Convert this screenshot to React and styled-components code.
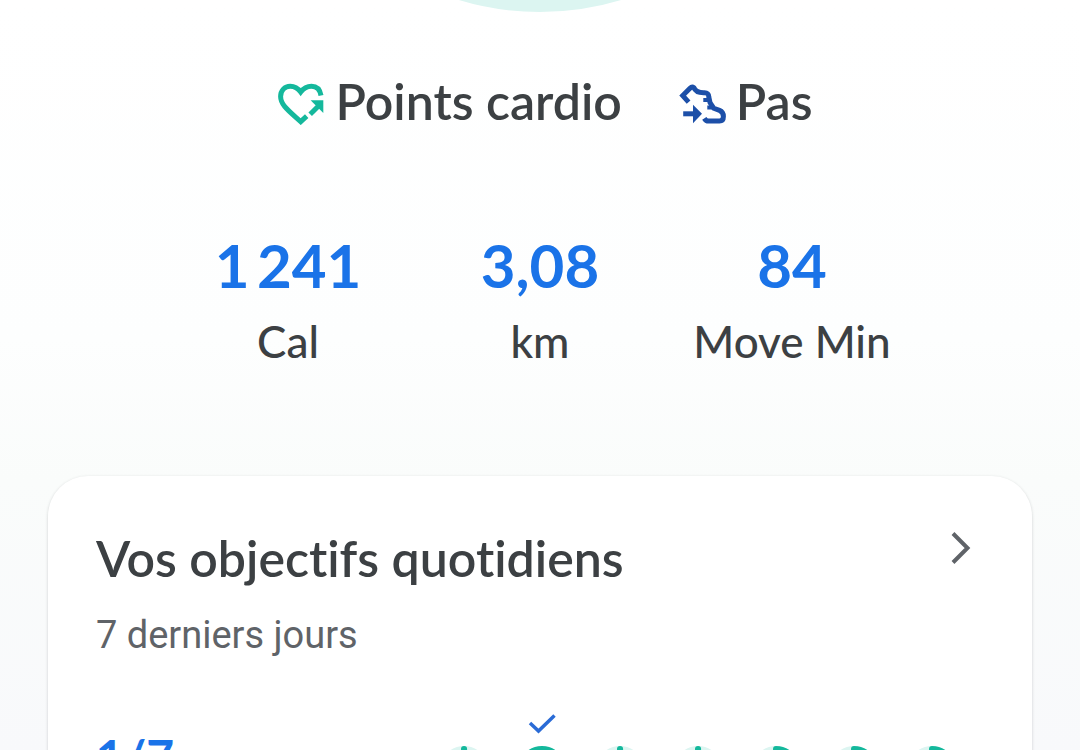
import React from "react";
import styled, { createGlobalStyle } from "styled-components";

const GlobalStyle = createGlobalStyle`
  * {
    box-sizing: border-box;
  }

  body {
    margin: 0;
    background: #ffffff;
    color: #3c4043;
    font-family: Lato, "Open Sans", sans-serif;
    font-weight: 500;
    font-variant-ligatures: none;
  }

  h2, p, dl, dt, dd, ul {
    margin: 0;
    padding: 0;
  }
`;

const Page = styled.main`
  height: 100vh;
  overflow: hidden;
  background: linear-gradient(#ffffff 0%, #fdfefe 45%, #fafcfb 64%, #f8f9fb 100%);
`;

const RingArea = styled.div`
  display: flex;
  flex-direction: column;
  justify-content: flex-end;
  align-items: center;
  height: 12px;
`;

const Ring = styled.div`
  flex: none;
  width: 560px;
  height: 560px;
  border: 32px solid #dcf5f1;
  border-radius: 50%;
`;

const Legend = styled.ul`
  display: flex;
  justify-content: center;
  gap: 56px;
  margin-top: 57px;
  padding-left: 10px;
  list-style: none;
`;

const LegendItem = styled.li`
  display: flex;
  align-items: center;
  gap: 10px;
  font-size: 50px;
  font-weight: 600;
  line-height: 64px;
`;

const LegendIcon = styled.svg`
  width: 48px;
  height: 48px;
  fill: none;
  stroke: ${props => props.$color};
  stroke-width: 5;
`;

const Stats = styled.dl`
  display: grid;
  grid-template-columns: repeat(3, 1fr);
  width: 70%;
  margin: 96px auto 0;
  text-align: center;
`;

const Stat = styled.div`
  display: flex;
  flex-direction: column-reverse;
  gap: 12px;
`;

const StatValue = styled.dd`
  color: #1a73e8;
  font-size: 60px;
  font-weight: 700;
  line-height: 72px;
`;

const StatLabel = styled.dt`
  font-size: 44px;
  line-height: 56px;
`;

const Card = styled.section`
  margin: 107px 48px 0;
  padding: 50px 48px;
  background: #ffffff;
  border-radius: 40px;
  box-shadow: 0 1px 3px rgba(60, 64, 67, 0.25);
`;

const CardHeader = styled.header`
  display: flex;
  justify-content: space-between;
  align-items: flex-start;
`;

const CardTitle = styled.h2`
  font-size: 50px;
  font-weight: 600;
  line-height: 64px;
`;

const CardSubtitle = styled.p`
  margin-top: 21px;
  color: #5f6368;
  font-family: Roboto, sans-serif;
  font-size: 38px;
  font-weight: 400;
  line-height: 48px;
`;

const OpenButton = styled.button`
  display: flex;
  padding: 0 4px 0 0;
  border: none;
  background: none;
  cursor: pointer;
`;

const Goals = styled.div`
  display: flex;
  justify-content: space-between;
  margin-top: 54px;
`;

const GoalCount = styled.p`
  margin-top: 12px;
  color: #1a73e8;
  font-size: 48px;
  font-weight: 700;
  line-height: 64px;
`;

const Days = styled.ul`
  display: flex;
  gap: 30px;
  padding-right: 28px;
  list-style: none;
`;

const Day = styled.li`
  display: flex;
  flex-direction: column;
  align-items: center;
  gap: 12px;
`;

const CheckSlot = styled.span`
  display: block;
  width: 28px;
  height: 21px;
`;

const days = [
  { id: 1, progress: 0.1 },
  { id: 2, progress: 100, done: true },
  { id: 3, progress: 0.1 },
  { id: 4, progress: 0.1 },
  { id: 5, progress: 20 },
  { id: 6, progress: 20 },
  { id: 7, progress: 20 }
];

const HeartIcon = () => (
  <LegendIcon viewBox="0 -3 48 48" $color="#14b89c" aria-hidden="true">
    <path d="M44 15.5C43 9.5 39.5 6.2 34.5 6.2c-4.300 0-8 2-10.800 5.800C21 8.200 17.300 6.200 13.200 6.200 7.700 6.200 3.600 10.700 3.600 16.500c0 8.500 8 14.300 20.100 25.200l6-5.600" />
    <path d="M33.200 34.200 42 25.400" />
    <path d="M33.600 20.300H46.300V33Z" fill="#14b89c" stroke="none" />
  </LegendIcon>
);

const ShoeIcon = () => (
  <LegendIcon viewBox="-1 -3 48 48" $color="#1c4fa8" aria-hidden="true">
    <path d="M9.600 22.200 3.700 15.600 11 8.200Q13 6.200 14.900 7.700C16.500 12 20 13 25.500 12.800 29 12.800 29.600 14 29.800 17L31 22.500 34.800 28.300 40.500 30.400C43.500 31.600 44.400 33.500 44.400 36.500 44.400 39.500 43 41 40.500 41H29.500Q27 41 25.300 38.300" />
    <path d="M24.300 20H31M28.300 27.500H35" strokeWidth="4" />
    <path d="M4.200 33.800H16" />
    <path d="M14 24.700V43.200L23 33.800Z" fill="#1c4fa8" stroke="none" />
  </LegendIcon>
);

const Chevron = () => (
  <svg width="44" height="44" viewBox="0 0 44 44" fill="none" aria-hidden="true">
    <path d="M17 7.500 31.500 22 17 36.500" stroke="#5f6368" strokeWidth="4" />
  </svg>
);

const Check = () => (
  <svg width="28" height="21" viewBox="0 0 28 21" role="img" aria-label="Objectif atteint">
    <path d="M2 10 10.500 18 26.500 2.500" fill="none" stroke="#2a6bd6" strokeWidth="3.500" />
  </svg>
);

const Dial = ({ progress }) => (
  <svg width="48" height="48" viewBox="0 0 48 48" fill="none" aria-hidden="true">
    <circle cx="24" cy="24" r="21" stroke="#dcf5f1" strokeWidth="6" />
    <circle
      cx="24"
      cy="24"
      r="21"
      stroke="#14b89c"
      strokeWidth="6"
      strokeLinecap="round"
      pathLength="100"
      strokeDasharray={`${progress} 100`}
      transform="rotate(-90 24 24)"
    />
  </svg>
);

const App = () => (
  <>
    <GlobalStyle />
    <Page>
      <RingArea>
        <Ring />
      </RingArea>
      <Legend>
        <LegendItem>
          <HeartIcon />
          Points cardio
        </LegendItem>
        <LegendItem>
          <ShoeIcon />
          Pas
        </LegendItem>
      </Legend>
      <Stats>
        <Stat>
          <StatLabel>Cal</StatLabel>
          <StatValue>1{"\u2009"}241</StatValue>
        </Stat>
        <Stat>
          <StatLabel>km</StatLabel>
          <StatValue>3,08</StatValue>
        </Stat>
        <Stat>
          <StatLabel>Move Min</StatLabel>
          <StatValue>84</StatValue>
        </Stat>
      </Stats>
      <Card>
        <CardHeader>
          <CardTitle>Vos objectifs quotidiens</CardTitle>
          <OpenButton type="button" aria-label="Vos objectifs quotidiens">
            <Chevron />
          </OpenButton>
        </CardHeader>
        <CardSubtitle>7 derniers jours</CardSubtitle>
        <Goals>
          <GoalCount>1/7</GoalCount>
          <Days>
            {days.map(day => (
              <Day key={day.id}>
                <CheckSlot>{day.done && <Check />}</CheckSlot>
                <Dial progress={day.progress} />
              </Day>
            ))}
          </Days>
        </Goals>
      </Card>
    </Page>
  </>
);

export default App;
